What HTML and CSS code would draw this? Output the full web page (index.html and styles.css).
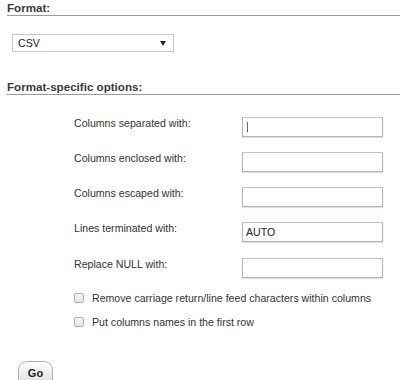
FILE: index.html
```html
<!DOCTYPE html>
<html>
<head>
<meta charset="utf-8">
<link rel="stylesheet" href="styles.css">
</head>
<body>
<div class="page">
  <h3 class="heading heading-1">Format:</h3>
  <div class="select-wrap">
    <div class="select"><span>CSV</span><span class="arrow"></span></div>
  </div>
  <h3 class="heading">Format-specific options:</h3>
  <div class="options">
    <div class="row"><label>Columns separated with:</label><div class="input"><span class="caret"></span></div></div>
    <div class="row"><label>Columns enclosed with:</label><div class="input"></div></div>
    <div class="row"><label>Columns escaped with:</label><div class="input"></div></div>
    <div class="row row-4"><label>Lines terminated with:</label><div class="input">AUTO</div></div>
    <div class="row row-last"><label>Replace NULL with:</label><div class="input"></div></div>
    <div class="check-row check-first"><span class="checkbox"></span><span>Remove carriage return/line feed characters within columns</span></div>
    <div class="check-row"><span class="checkbox"></span><span>Put columns names in the first row</span></div>
  </div>
  <div class="footer">
    <div class="go">Go</div>
  </div>
</div>
</body>
</html>
```
FILE: styles.css
```css
html, body {
  margin: 0;
  padding: 0;
  background: #fff;
  overflow: hidden;
}
.page {
  width: 400px;
  height: 380px;
  overflow: hidden;
  font-family: "Liberation Sans", Arial, sans-serif;
  color: #333;
  font-size: 10.6px;
}
.heading {
  margin: 0 0 0 7px;
  padding-top: 1px;
  height: 14px;
  font-size: 11.6px;
  font-weight: bold;
  color: #3a3a3a;
  line-height: 13px;
  border-bottom: 1px solid #9a9a9a;
}
.select-wrap {
  box-sizing: border-box;
  height: 63px;
  padding: 18px 0 0 12px;
}
.select {
  box-sizing: border-box;
  width: 162px;
  height: 18px;
  border: 1px solid #c8c8c8;
  display: flex;
  align-items: center;
  justify-content: space-between;
  padding: 0 7px 0 5px;
  color: #222;
}
.arrow {
  width: 0;
  height: 0;
  border-left: 3px solid transparent;
  border-right: 3px solid transparent;
  border-top: 5px solid #222;
}
.options {
  padding: 22px 0 0 74px;
}
.row {
  display: flex;
  align-items: flex-start;
  height: 35px;
}
.row-4 {
  height: 36px;
}
.row-last {
  height: 19.5px;
}
.row label {
  width: 168px;
  line-height: 13px;
}
.input {
  box-sizing: border-box;
  width: 141px;
  height: 19.5px;
  border: 1px solid #b4b4b4;
  border-top-color: #c4c4c4;
  box-shadow: 0 1px 1px #e0e0e0;
  padding-left: 3px;
  color: #222;
  display: flex;
  align-items: center;
}
.caret {
  width: 1px;
  height: 10px;
  background: #666;
  margin-left: 1px;
}
.check-row {
  display: flex;
  align-items: center;
  height: 24px;
}
.check-first {
  margin-top: 8.5px;
}
.checkbox {
  box-sizing: border-box;
  width: 10px;
  height: 10px;
  border: 1px solid #b0b0b0;
  border-radius: 2px;
  background: linear-gradient(#fdfdfd, #e2e2e2);
  margin-right: 8px;
}
.footer {
  box-sizing: border-box;
  width: 54px;
  height: 53px;
  margin-top: 26.5px;
  padding-left: 18px;
  border-bottom: 1px solid #aaa;
}
.go {
  box-sizing: border-box;
  width: 35px;
  height: 19px;
  border: 1px solid #b0b0b0;
  border-bottom: none;
  border-radius: 9px 9px 0 0;
  background: linear-gradient(#ffffff, #e4e4e4);
  text-align: center;
  font-weight: bold;
  font-size: 11px;
  line-height: 22px;
  color: #222;
}
```
